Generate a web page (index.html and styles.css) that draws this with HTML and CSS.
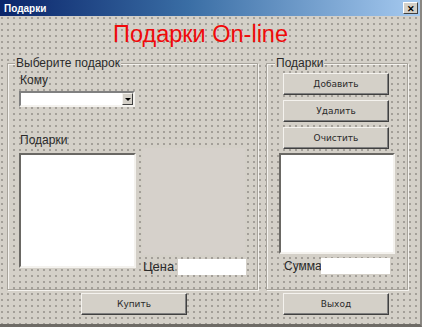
FILE: index.html
```html
<!DOCTYPE html>
<html lang="ru">
<head>
    <meta charset="UTF-8">
    <title>Подарки</title>
    <link rel="stylesheet" href="styles.css">
</head>
<body>
    <div class="window">
        <div class="titlebar">
            <span class="title">Подарки</span>
            <span class="close">&#x2715;</span>
        </div>
        <div class="form">
            <h1 class="heading">Подарки On-line</h1>
            <div class="frames">
                <fieldset class="frame frame-choose">
                    <legend>Выберите подарок</legend>
                    <div class="label to-label">Кому</div>
                    <div class="combo">
                        <span class="combo-btn"><span class="arrow"></span></span>
                    </div>
                    <div class="gift-row">
                        <div class="gift-col">
                            <div class="label">Подарки</div>
                            <div class="listbox list-gifts"></div>
                        </div>
                        <div class="picture-col">
                            <div class="picture"></div>
                            <div class="field-row">
                                <span class="label price-label">Цена</span>
                                <div class="textbox price-box"></div>
                            </div>
                        </div>
                    </div>
                </fieldset>
                <fieldset class="frame frame-cart">
                    <legend>Подарки</legend>
                    <button class="button cart-button">Добавить</button>
                    <button class="button cart-button">Удалить</button>
                    <button class="button cart-button">Очистить</button>
                    <div class="listbox list-cart"></div>
                    <div class="field-row sum-row">
                        <span class="label sum-label">Сумма</span>
                        <div class="textbox sum-box"></div>
                    </div>
                </fieldset>
            </div>
            <div class="bottom-row">
                <button class="button buy">Купить</button>
                <button class="button quit">Выход</button>
            </div>
        </div>
    </div>
</body>
</html>
```

FILE: styles.css
```css
body {
    margin: 0;
    font-family: "Liberation Sans", Arial, sans-serif;
    background: #d4d0c8;
}
.window {
    width: 422px;
    height: 327px;
    box-sizing: border-box;
    border-right: 2px solid #8a8782;
    border-bottom: 3px solid #6e6b66;
    overflow: hidden;
}
.titlebar {
    height: 16px;
    display: flex;
    align-items: center;
    justify-content: space-between;
    padding: 0 2px 0 4px;
    background: linear-gradient(to right, #0a246a 0%, #3a6ea5 45%, #a6caf0 100%);
}
.title {
    color: white;
    font-size: 10px;
    font-weight: bold;
}
.close {
    width: 15px;
    height: 12px;
    line-height: 12px;
    text-align: center;
    font-size: 9px;
    font-weight: bold;
    color: black;
    background: #d4d0c8;
    border: 1px solid;
    border-color: white #404040 #404040 white;
    box-sizing: border-box;
}
.form {
    height: 308px;
    background-color: #d4d0c8;
    background-image: radial-gradient(circle, #a29e97 0.7px, transparent 0.9px);
    background-size: 6px 6px;
    background-position: -1px -1px;
}
.heading {
    margin: 0;
    padding: 5px 0 0 113px;
    font-size: 23.5px;
    line-height: 27px;
    font-weight: normal;
    color: #f00a0a;
}
.frames {
    display: flex;
    margin-top: 9px;
}
.frame {
    box-sizing: border-box;
    height: 233px;
    margin: 0;
    padding: 0 0 0 11px;
    border: 1px solid #a8a49c;
    box-shadow: inset 1px 1px 0 #f4f2ee, 1px 1px 0 #f4f2ee;
}
.frame legend {
    margin-left: -4px;
    padding: 0 1px;
    font-size: 12px;
    line-height: 13px;
    color: #2a2a2a;
    background: #d4d0c8;
}
.frame-choose {
    margin-left: 7px;
    width: 251px;
}
.frame-cart {
    margin-left: 8px;
    width: 142px;
    padding-left: 12px;
}
.label {
    font-size: 12px;
    line-height: 14px;
    color: #2a2a2a;
    margin-left: 1px;
}
.to-label {
    margin-top: 3px;
}
.combo {
    margin-top: 4px;
    width: 116px;
    height: 16px;
    box-sizing: border-box;
    background: white;
    border: 2px solid;
    border-color: #808080 #f4f2ee #f4f2ee #808080;
    display: flex;
    justify-content: flex-end;
}
.combo-btn {
    width: 11px;
    height: 12px;
    box-sizing: border-box;
    background: #d4d0c8;
    border: 1px solid;
    border-color: #f4f2ee #404040 #404040 #f4f2ee;
    display: flex;
    align-items: center;
    justify-content: center;
}
.arrow {
    width: 0;
    height: 0;
    border-left: 3px solid transparent;
    border-right: 3px solid transparent;
    border-top: 3px solid black;
}
.gift-row {
    display: flex;
    margin-top: 26px;
}
.listbox {
    box-sizing: border-box;
    background: white;
    border: 2px solid;
    border-color: #6a6864 #f4f2ee #f4f2ee #6a6864;
}
.list-gifts {
    margin-top: 6px;
    width: 117px;
    height: 115px;
}
.picture-col {
    margin-left: 6px;
}
.picture {
    margin-top: 15px;
    width: 103px;
    height: 107px;
    background: #d6d1cb;
}
.field-row {
    display: flex;
    align-items: center;
    margin-top: 4px;
}
.price-label {
    width: 35px;
    font-size: 13px;
}
.textbox {
    height: 16px;
    background: white;
}
.price-box {
    width: 68px;
}
.button {
    display: block;
    box-sizing: border-box;
    width: 106px;
    height: 22px;
    padding: 0;
    font-family: "DejaVu Sans", sans-serif;
    font-size: 9px;
    color: #2a2a2a;
    background: #d4d0c8;
    border: 1px solid;
    border-color: #f4f2ee #404040 #404040 #f4f2ee;
    box-shadow: inset -1px -1px 0 #808080;
}
.cart-button {
    margin: 3px 0 0 4px;
}
.cart-button + .cart-button {
    margin-top: 5px;
}
.list-cart {
    margin-top: 4px;
    width: 116px;
    height: 101px;
}
.sum-row {
    margin-top: 4px;
}
.sum-label {
    margin-left: 5px;
    width: 37px;
}
.sum-box {
    width: 69px;
}
.bottom-row {
    display: flex;
    margin-top: 3px;
}
.buy {
    margin-left: 81px;
}
.quit {
    margin-left: 96px;
}
```
